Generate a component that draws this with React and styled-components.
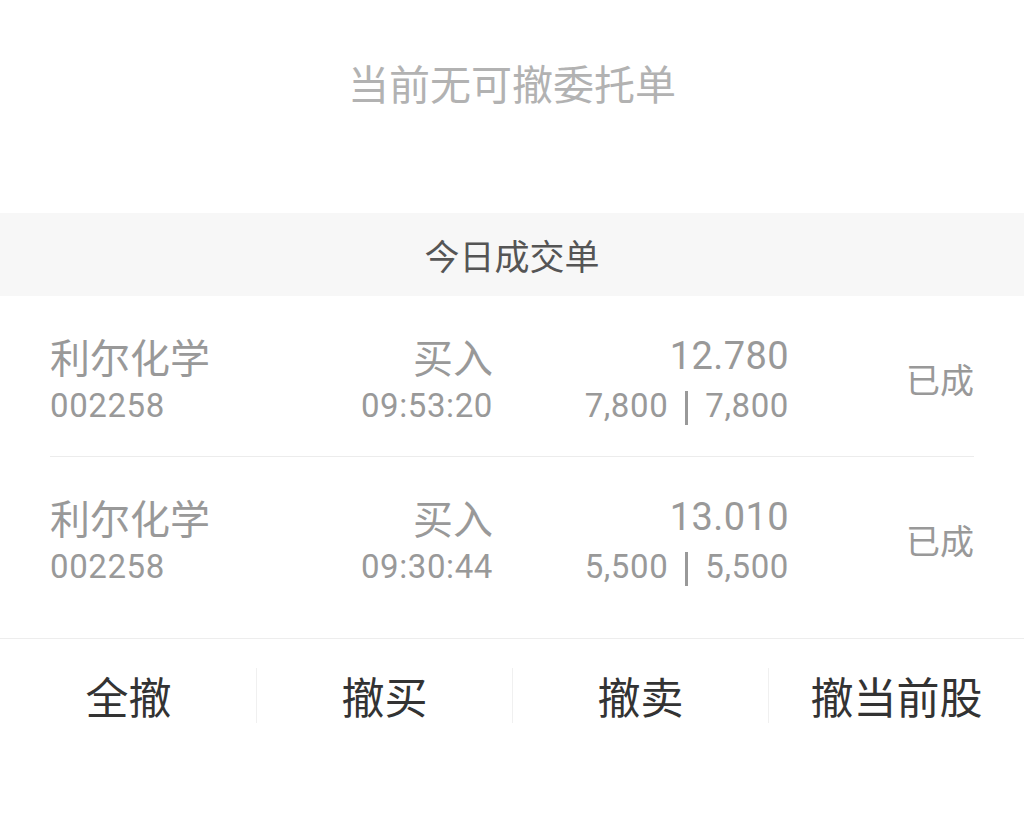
import React from 'react'
import styled, { createGlobalStyle } from 'styled-components'

const GlobalStyle = createGlobalStyle`
  html, body {
    margin: 0;
    padding: 0;
    background: #fff;
  }
  body {
    font-family: "Noto Sans CJK SC", "Noto Sans", sans-serif;
  }
`

const NUM_FONT = `Roboto, "Noto Sans CJK SC", sans-serif`

const trades = [
  { id: 1, name: '利尔化学', code: '002258', side: '买入', time: '09:53:20', price: '12.780', qty: '7,800', filled: '7,800', status: '已成' },
  { id: 2, name: '利尔化学', code: '002258', side: '买入', time: '09:30:44', price: '13.010', qty: '5,500', filled: '5,500', status: '已成' }
]

const Page = styled.div`
  width: 1024px;
  min-height: 834px;
  background: #fff;
`

const Empty = styled.div`
  height: 213px;
  box-sizing: border-box;
  padding-top: 57px;
  text-align: center;
  font-size: 41px;
  line-height: 50px;
  color: #b2b2b2;
`

const Band = styled.div`
  height: 83px;
  display: flex;
  align-items: center;
  justify-content: center;
  background: #f7f7f7;
  font-size: 35px;
  color: #555;
`

const List = styled.ul`
  list-style: none;
  margin: 0;
  padding: 0 50px 21px;
`

const Row = styled.li`
  display: grid;
  grid-template-columns: 242px 201px 296px 1fr;
  align-items: center;
  padding: 35px 0 25px;
  border-bottom: 1px solid #ececec;

  &:last-child {
    border-bottom: none;
  }
`

const Cell = styled.div`
  display: flex;
  flex-direction: column;
  align-items: ${({ $right }) => ($right ? 'flex-end' : 'flex-start')};
`

const Name = styled.span`
  font-size: 40px;
  line-height: 50px;
  color: #999;
`

const Big = styled.span`
  font-family: ${NUM_FONT};
  font-size: 38px;
  line-height: 50px;
  letter-spacing: 0.4px;
  color: #999;
`

const Small = styled.span`
  font-family: ${NUM_FONT};
  font-size: 33px;
  line-height: 50px;
  letter-spacing: 0.6px;
  color: #999;
  display: flex;
  align-items: center;
`

const Bar = styled.span`
  display: inline-block;
  width: 3px;
  height: 34px;
  margin: 4px 17px 0;
  background: #999;
`

const Status = styled.span`
  justify-self: end;
  margin-top: -6px;
  font-size: 34px;
  color: #999;
`

const Actions = styled.div`
  display: flex;
  border-top: 1px solid #ededed;
  padding-top: 29px;
`

const Action = styled.button`
  flex: 1;
  height: 55px;
  border: none;
  border-left: 1px solid ${({ $first }) => ($first ? 'transparent' : '#f0f0f0')};
  background: none;
  padding: 0;
  font-family: "Noto Sans CJK SC", sans-serif;
  font-size: 43px;
  line-height: 55px;
  color: #333;
`

const App = () => (
  <Page>
    <GlobalStyle />
    <Empty>当前无可撤委托单</Empty>
    <Band>今日成交单</Band>
    <List>
      {trades.map(t => (
        <Row key={t.id}>
          <Cell>
            <Name>{t.name}</Name>
            <Small>{t.code}</Small>
          </Cell>
          <Cell $right>
            <Name>{t.side}</Name>
            <Small>{t.time}</Small>
          </Cell>
          <Cell $right>
            <Big>{t.price}</Big>
            <Small>
              {t.qty}
              <Bar />
              {t.filled}
            </Small>
          </Cell>
          <Status>{t.status}</Status>
        </Row>
      ))}
    </List>
    <Actions>
      {['全撤', '撤买', '撤卖', '撤当前股'].map((label, i) => (
        <Action key={label} $first={i === 0}>
          {label}
        </Action>
      ))}
    </Actions>
  </Page>
)

export default App
